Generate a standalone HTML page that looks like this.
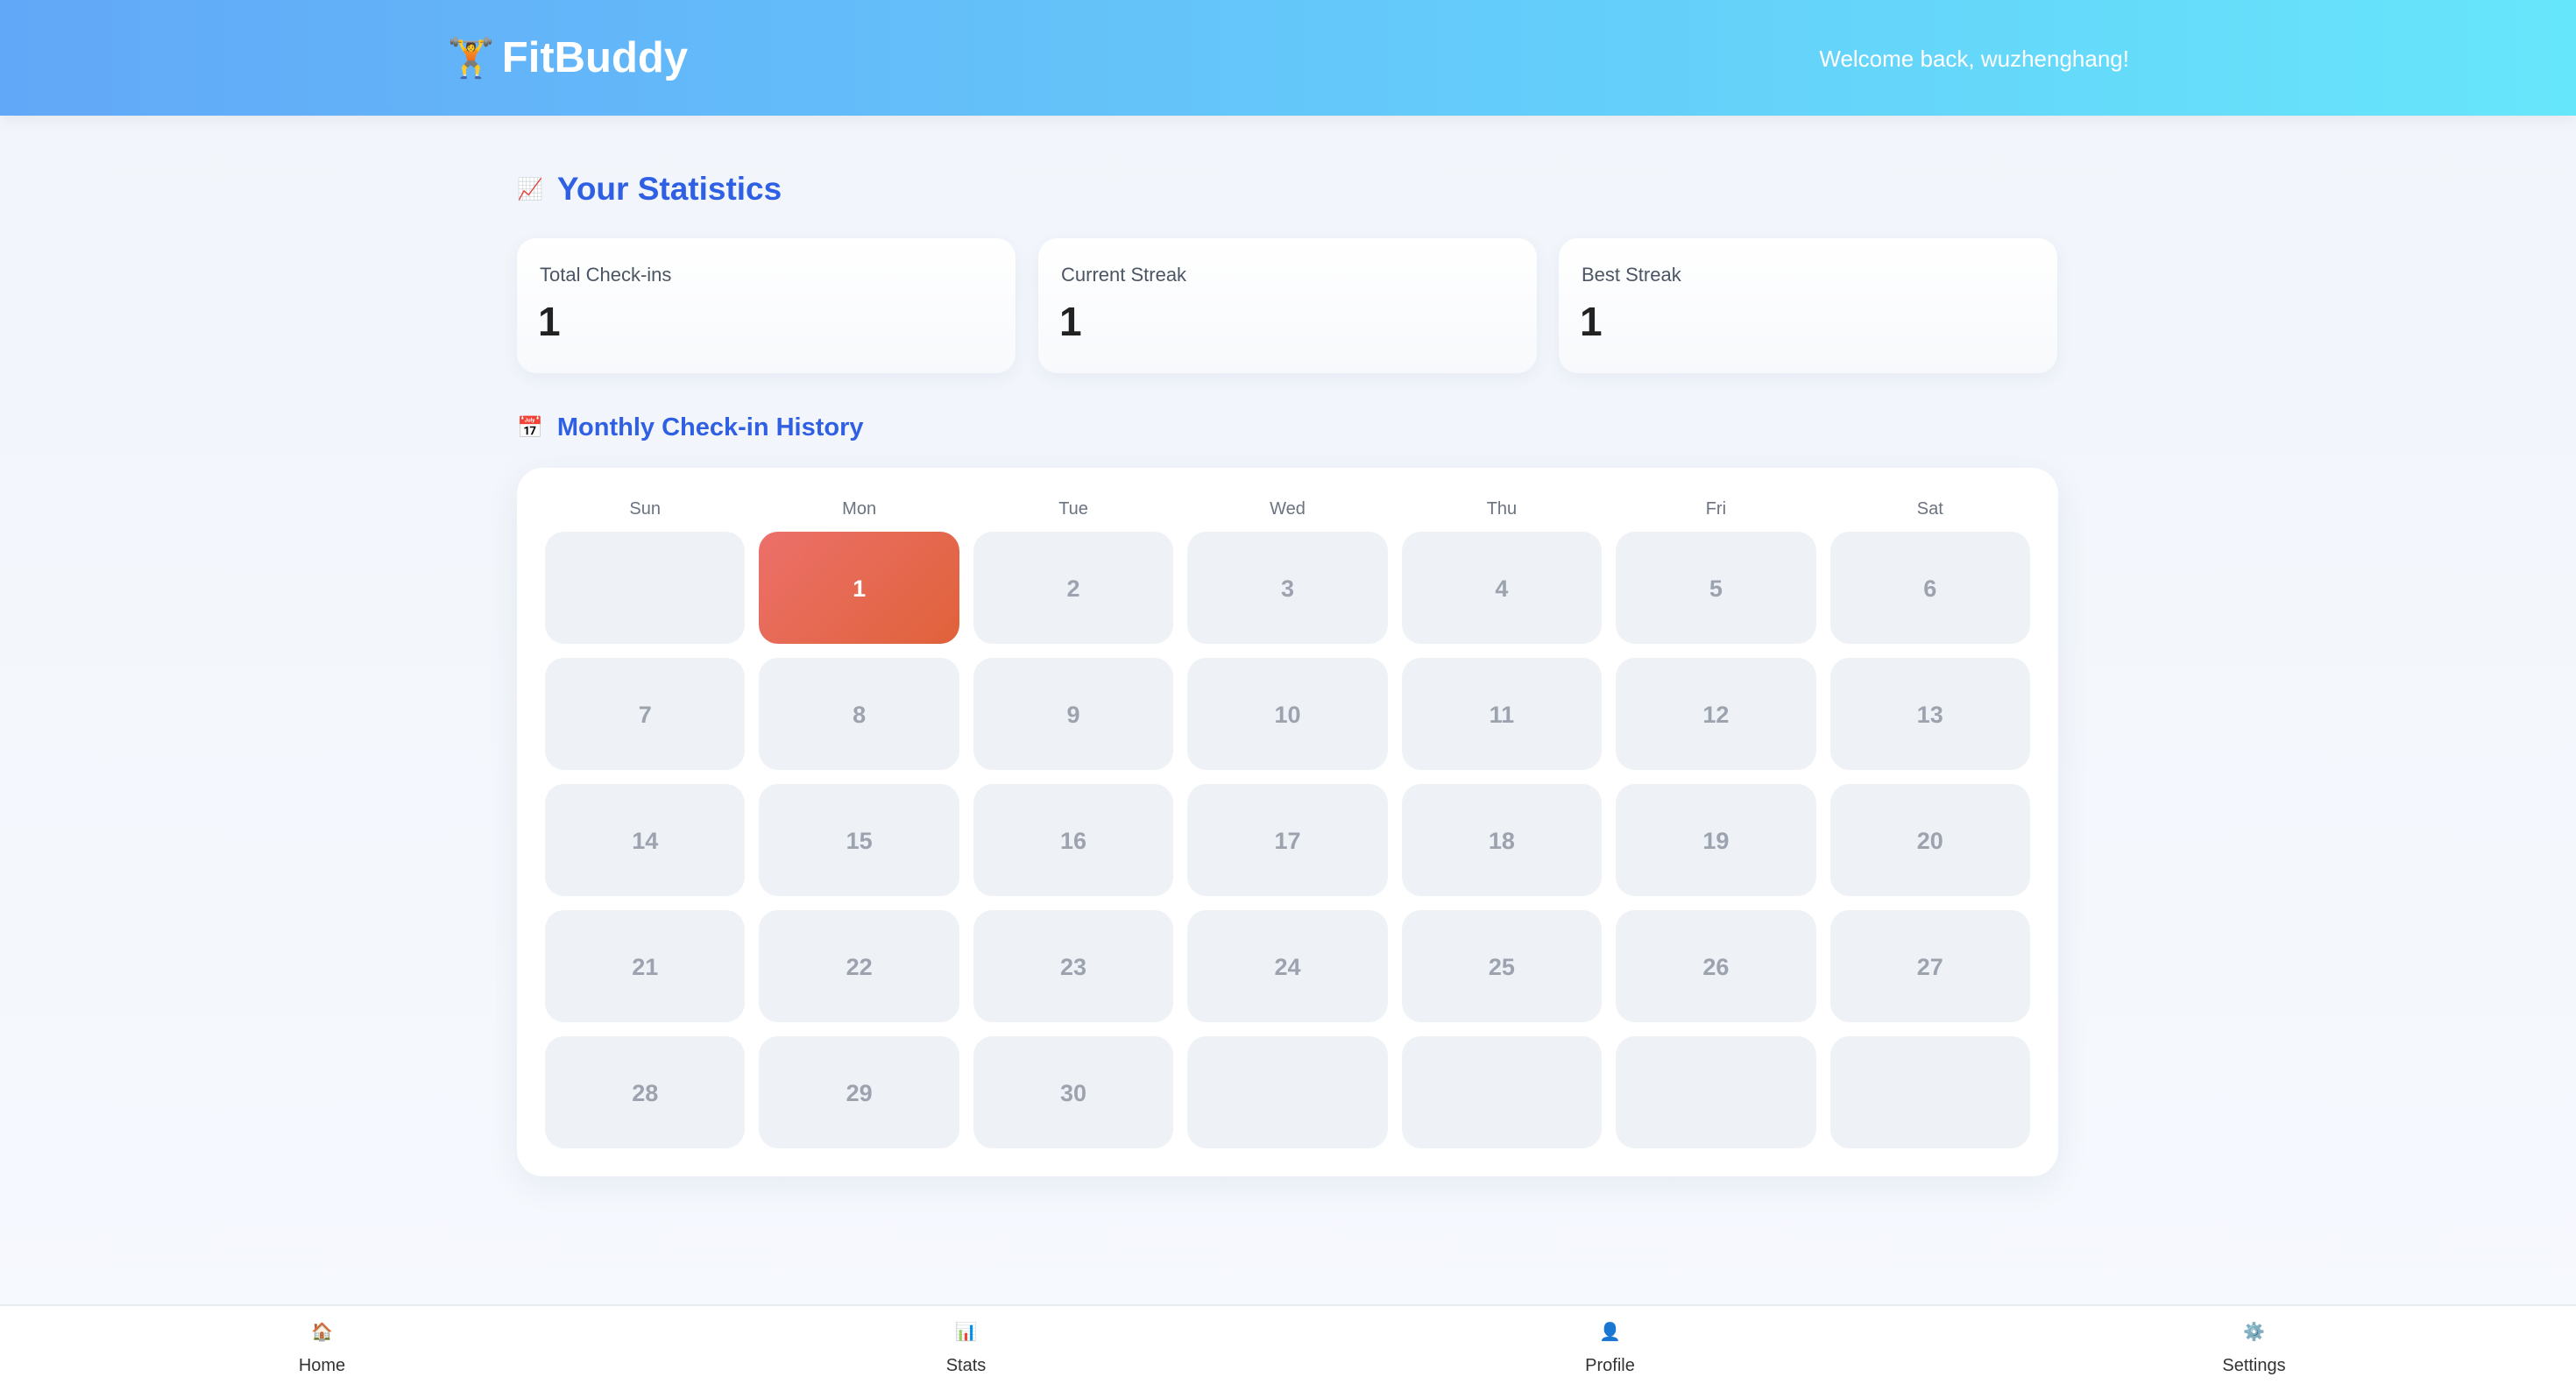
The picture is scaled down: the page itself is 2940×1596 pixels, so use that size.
<!DOCTYPE html>
<html><head><meta charset="utf-8"><style>
*{box-sizing:border-box;margin:0;padding:0}
body{width:2940px;height:1596px;overflow:hidden;font-family:"Liberation Sans","Noto Sans CJK SC",sans-serif;background:linear-gradient(180deg,#f1f5fb,#f6f9fe);position:relative}
.hdr{position:absolute;left:0;top:0;width:2940px;height:132px;background:linear-gradient(90deg,#62a8f8,#66e6fb);box-shadow:0 4px 16px rgba(0,0,0,.06)}
.logo{position:absolute;left:510px;top:38px;font-size:49px;font-weight:bold;color:#fff;display:flex;align-items:center;gap:8px}
.logo span.e{font-size:44px}
.wel{position:absolute;right:510px;top:52px;font-size:26px;color:#fff}
h2{position:absolute;left:590px;font-weight:bold;color:#2f5fe3;display:flex;align-items:center}
h2 .i{font-size:24px;margin-right:16px}
.card{position:absolute;top:272px;width:569px;height:154px;background:linear-gradient(180deg,#fff,#f7f9fc);border-radius:22px;box-shadow:0 6px 20px rgba(30,50,90,.06)}
.card .l{position:absolute;left:26px;top:29px;font-size:22px;color:#4b5563}
.card .v{position:absolute;left:24px;top:68px;font-size:46px;font-weight:bold;color:#222}
.cal{position:absolute;left:590px;top:534px;width:1759px;height:809px;background:#fff;border-radius:30px;box-shadow:0 10px 40px rgba(30,50,90,.07);padding:32px}
.grid{display:grid;grid-template-columns:repeat(7,1fr);column-gap:16px}
.dh{text-align:center;font-size:20px;color:#6b7280;height:41px;line-height:26px;padding-top:2px}
.c{height:128px;margin-bottom:16px;background:#eef1f6;border-radius:22px;display:flex;align-items:center;justify-content:center;font-size:27px;font-weight:bold;color:#9ca3af;padding-top:2px}
.c.on{background:linear-gradient(135deg,#ec706a,#e0623a);color:#fff}
.nav{position:absolute;left:0;top:1489px;width:2940px;height:107px;background:#fff;border-top:2px solid #e8ecf1;display:flex}
.nav div{flex:1;text-align:center;padding-top:8px}
.nav .ic{font-size:20px;height:28px;line-height:28px}
.nav .t{font-size:20px;color:#333;margin-top:13px}
</style></head><body>
<div class="hdr"><div class="logo"><span class="e">🏋️</span>FitBuddy</div><div class="wel">Welcome back, wuzhenghang!</div></div>
<h2 style="top:195px;font-size:37px"><span class="i">📈</span>Your Statistics</h2>
<div class="card" style="left:590px"><div class="l">Total Check-ins</div><div class="v">1</div></div>
<div class="card" style="left:1185px"><div class="l">Current Streak</div><div class="v">1</div></div>
<div class="card" style="left:1779px"><div class="l">Best Streak</div><div class="v">1</div></div>
<h2 style="top:472px;font-size:29px"><span class="i">📅</span>Monthly Check-in History</h2>
<div class="cal"><div class="grid">
<div class="dh">Sun</div><div class="dh">Mon</div><div class="dh">Tue</div><div class="dh">Wed</div><div class="dh">Thu</div><div class="dh">Fri</div><div class="dh">Sat</div>
<div class="c"></div><div class="c on">1</div><div class="c">2</div><div class="c">3</div><div class="c">4</div><div class="c">5</div><div class="c">6</div>
<div class="c">7</div><div class="c">8</div><div class="c">9</div><div class="c">10</div><div class="c">11</div><div class="c">12</div><div class="c">13</div>
<div class="c">14</div><div class="c">15</div><div class="c">16</div><div class="c">17</div><div class="c">18</div><div class="c">19</div><div class="c">20</div>
<div class="c">21</div><div class="c">22</div><div class="c">23</div><div class="c">24</div><div class="c">25</div><div class="c">26</div><div class="c">27</div>
<div class="c">28</div><div class="c">29</div><div class="c">30</div><div class="c"></div><div class="c"></div><div class="c"></div><div class="c"></div>
</div></div>
<div class="nav">
<div><div class="ic">🏠</div><div class="t">Home</div></div>
<div><div class="ic">📊</div><div class="t">Stats</div></div>
<div><div class="ic">👤</div><div class="t">Profile</div></div>
<div><div class="ic">⚙️</div><div class="t">Settings</div></div>
</div>
</body></html>
